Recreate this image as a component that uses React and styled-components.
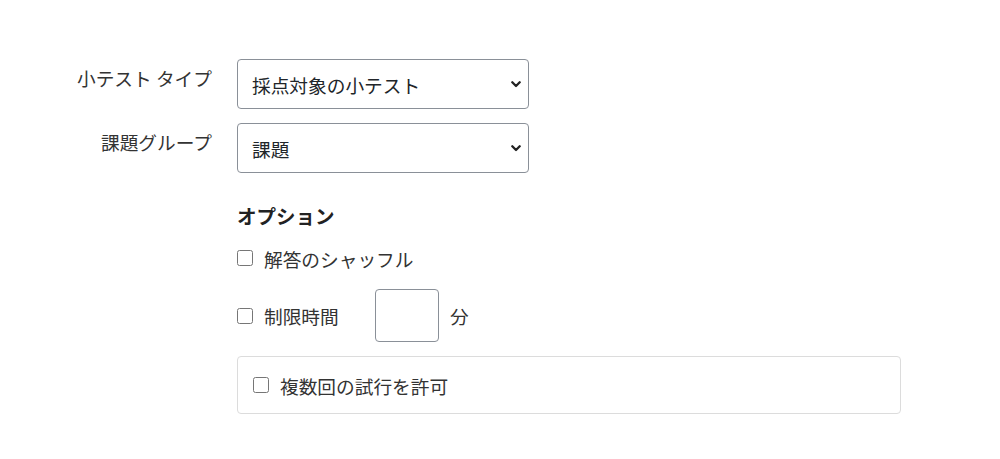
import styled, { createGlobalStyle } from "styled-components";

const GlobalStyle = createGlobalStyle`
  body {
    margin: 0;
    background: #fff;
    font-family: "Noto Sans CJK JP", "Noto Sans", sans-serif;
    color: #333;
  }
`;

const Page = styled.div`
  width: 1000px;
  height: 459px;
  padding-top: 59px;
  box-sizing: border-box;
`;

const Form = styled.div`
  display: grid;
  grid-template-columns: 212px 664px;
  column-gap: 25px;
  row-gap: 14px;
`;

const Label = styled.label`
  text-align: right;
  font-size: 18.7px;
  line-height: 26px;
  padding-top: 6px;
  color: #333;
`;

const SelectWrap = styled.div`
  position: relative;
  width: 292px;
  height: 50px;
`;

const Select = styled.select`
  appearance: none;
  width: 100%;
  height: 100%;
  padding: 0 30px 0 14px;
  font-family: inherit;
  font-size: 18.7px;
  color: #212529;
  background: #fff;
  border: 1px solid #8a9098;
  border-radius: 4px;
  box-sizing: border-box;
`;

const Chevron = styled.svg`
  position: absolute;
  right: 8px;
  top: 50%;
  width: 10px;
  height: 7px;
  margin-top: -3px;
  pointer-events: none;
`;

const Options = styled.div`
  display: flex;
  flex-direction: column;
  padding-top: 15px;
`;

const Heading = styled.h3`
  margin: 0 0 15px;
  font-size: 19.5px;
  line-height: 28px;
  font-weight: 700;
  color: #222;
`;

const CheckRow = styled.div`
  display: flex;
  align-items: center;
  gap: 11px;
  height: ${({ $h }) => $h || 26}px;
  margin-bottom: ${({ $mb }) => $mb || 0}px;
  font-size: 18.7px;
  color: #333;
`;

const Check = styled.input.attrs({ type: "checkbox" })`
  width: 16px;
  height: 16px;
  margin: 0;
  flex: none;
`;

const CheckText = styled.span`
  width: ${({ $w }) => ($w ? `${$w}px` : "auto")};
`;

const MinuteInput = styled.input.attrs({ type: "text" })`
  width: 64px;
  height: 53px;
  box-sizing: border-box;
  border: 1px solid #8a9098;
  border-radius: 4px;
`;

const Box = styled.div`
  display: flex;
  align-items: center;
  gap: 11px;
  height: 58px;
  box-sizing: border-box;
  padding: 0 15px;
  border: 1px solid #dcdcdc;
  border-radius: 4px;
  font-size: 18.7px;
  color: #333;
`;

const Dropdown = ({ value, children }) => (
  <SelectWrap>
    <Select defaultValue={value}>{children}</Select>
    <Chevron viewBox="0 0 10 7">
      <path d="M1.3 1.3 L5 5 L8.7 1.3" fill="none" stroke="#222" strokeWidth="2.3" strokeLinecap="round" strokeLinejoin="round" />
    </Chevron>
  </SelectWrap>
);

export default function App() {
  return (
    <Page>
      <GlobalStyle />
      <Form>
        <Label>小テスト タイプ</Label>
        <Dropdown value="graded">
          <option value="graded">採点対象の小テスト</option>
        </Dropdown>
        <Label>課題グループ</Label>
        <Dropdown value="task">
          <option value="task">課題</option>
        </Dropdown>
        <div />
        <Options>
          <Heading>オプション</Heading>
          <CheckRow $mb={18}>
            <Check />
            <span>解答のシャッフル</span>
          </CheckRow>
          <CheckRow $h={53} $mb={14}>
            <Check />
            <CheckText $w={100}>制限時間</CheckText>
            <MinuteInput />
            <span>分</span>
          </CheckRow>
          <Box>
            <Check />
            <span>複数回の試行を許可</span>
          </Box>
        </Options>
      </Form>
    </Page>
  );
}
